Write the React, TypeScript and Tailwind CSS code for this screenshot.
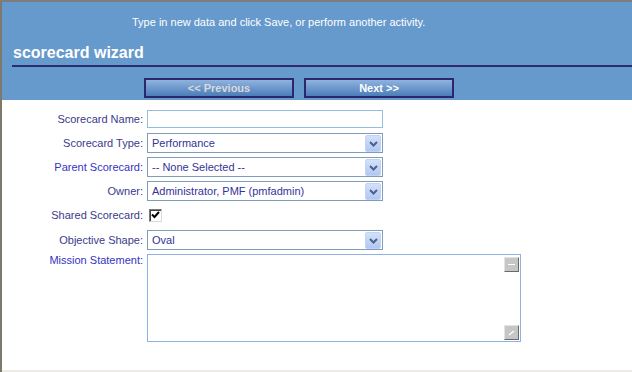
import { useState } from "react";

const font = { fontFamily: '"Liberation Sans", Arial, sans-serif' };

function DropArrow() {
  return (
    <span className="absolute right-px top-px flex h-[17px] w-[16px] items-center justify-center rounded-[2px] bg-gradient-to-b from-[#d3e0fb] to-[#b1c8f4] border border-[#c4d3f2]">
      <svg width="9" height="6" viewBox="0 0 9 6">
        <path d="M1 1 L4.5 4.5 L8 1" fill="none" stroke="#4d6185" strokeWidth="2" />
      </svg>
    </span>
  );
}

function SelectBox({ value }: { value: string }) {
  return (
    <div className="relative h-[20px] w-[236px] border border-[#7f9db9] bg-white pl-[4px] text-[11px] leading-[18px] text-[#333399]">
      {value}
      <DropArrow />
    </div>
  );
}

function Row({
  label,
  link,
  className = "",
  children,
}: {
  label: string;
  link?: boolean;
  className?: string;
  children: React.ReactNode;
}) {
  return (
    <div className={`flex items-center gap-[4px] ${className}`}>
      <div
        className={`w-[141px] text-right text-[11px] ${link ? "text-[#3434c4]" : "text-[#3a3a8c]"}`}
      >
        {label}
      </div>
      {children}
    </div>
  );
}

export default function App() {
  const [name, setName] = useState("");

  return (
    <div
      className="flex h-[372px] w-[632px] flex-col overflow-hidden border-t-2 border-l-2 border-t-[#7c7c7c] border-l-[#7d7a6c] bg-white"
      style={font}
    >
      {/* Header */}
      <div className="h-[98px] bg-[#6699cc] flex flex-col">
        <div className="mt-[13px] pl-[130px] text-[11px] leading-[14px] text-white">
          Type in new data and click Save, or perform another activity.
        </div>
        <div className="mt-[14px] pl-[11px] text-[16px] font-bold leading-[20px] text-white">
          scorecard wizard
        </div>
        <div className="ml-[10px] mt-[2px] h-[2px] bg-[#2e2a6e]" />
        <div className="ml-[142px] mt-[11px] flex gap-[10px]">
          <button className="h-[20px] w-[150px] border-2 border-[#29286e] bg-gradient-to-b from-[#8fb3df] to-[#4c7db9] text-[11px] font-bold leading-[16px] text-[#d9d9d9]">
            &lt;&lt; Previous
          </button>
          <button className="h-[20px] w-[150px] border-2 border-[#29286e] bg-gradient-to-b from-[#8fb3df] to-[#4c7db9] text-[11px] font-bold leading-[16px] text-white">
            Next &gt;&gt;
          </button>
        </div>
      </div>

      {/* Form */}
      <div className="flex flex-1 flex-col">
        <Row label="Scorecard Name:" className="mt-[10px]">
          <input
            value={name}
            onChange={(e) => setName(e.target.value)}
            className="h-[18px] w-[236px] border border-[#95bde0] bg-white px-[4px] text-[11px] outline-none"
          />
        </Row>
        <Row label="Scorecard Type:" className="mt-[5px]">
          <SelectBox value="Performance" />
        </Row>
        <Row label="Parent Scorecard:" link className="mt-[4px]">
          <SelectBox value="-- None Selected --" />
        </Row>
        <Row label="Owner:" className="mt-[4px]">
          <SelectBox value="Administrator, PMF (pmfadmin)" />
        </Row>
        <Row label="Shared Scorecard:" className="mt-[1px] h-[26px]">
          <div className="ml-[2px] flex h-[13px] w-[13px] items-center justify-center border border-t-[#7a7a7a] border-l-[#7a7a7a] border-r-[#d8d8d8] border-b-[#d8d8d8] bg-white shadow-[inset_1px_1px_0_#404040]">
            <svg width="9" height="8" viewBox="0 0 9 8">
              <path d="M1 3.5 L3.5 6 L8 1" fill="none" stroke="#000" strokeWidth="2" />
            </svg>
          </div>
        </Row>
        <Row label="Objective Shape:" className="mt-[2px]">
          <SelectBox value="Oval" />
        </Row>
        <div className="mt-[4px] flex items-start gap-[4px]">
          <div className="w-[141px] text-right text-[11px] leading-[13px] text-[#3434c4]">
            Mission Statement:
          </div>
          <div className="relative h-[88px] w-[374px] border border-[#8db2e3] bg-white">
            <span className="absolute right-px top-[2px] flex h-[15px] w-[15px] items-center justify-center border border-t-[#e4e4e4] border-l-[#e4e4e4] border-r-[#6a6a6a] border-b-[#6a6a6a] bg-[#c6c6c6]">
              <span className="h-[1px] w-[7px] bg-white" />
            </span>
            <span className="absolute right-px bottom-px flex h-[15px] w-[15px] items-center justify-center border border-t-[#e4e4e4] border-l-[#e4e4e4] border-r-[#6a6a6a] border-b-[#6a6a6a] bg-[#c6c6c6]">
              <svg width="7" height="6" viewBox="0 0 7 6">
                <path d="M1 5 L6 1" stroke="#fff" strokeWidth="1.2" />
              </svg>
            </span>
          </div>
        </div>
      </div>
      <div className="h-[2px] bg-[#ecebe4]" />
    </div>
  );
}
